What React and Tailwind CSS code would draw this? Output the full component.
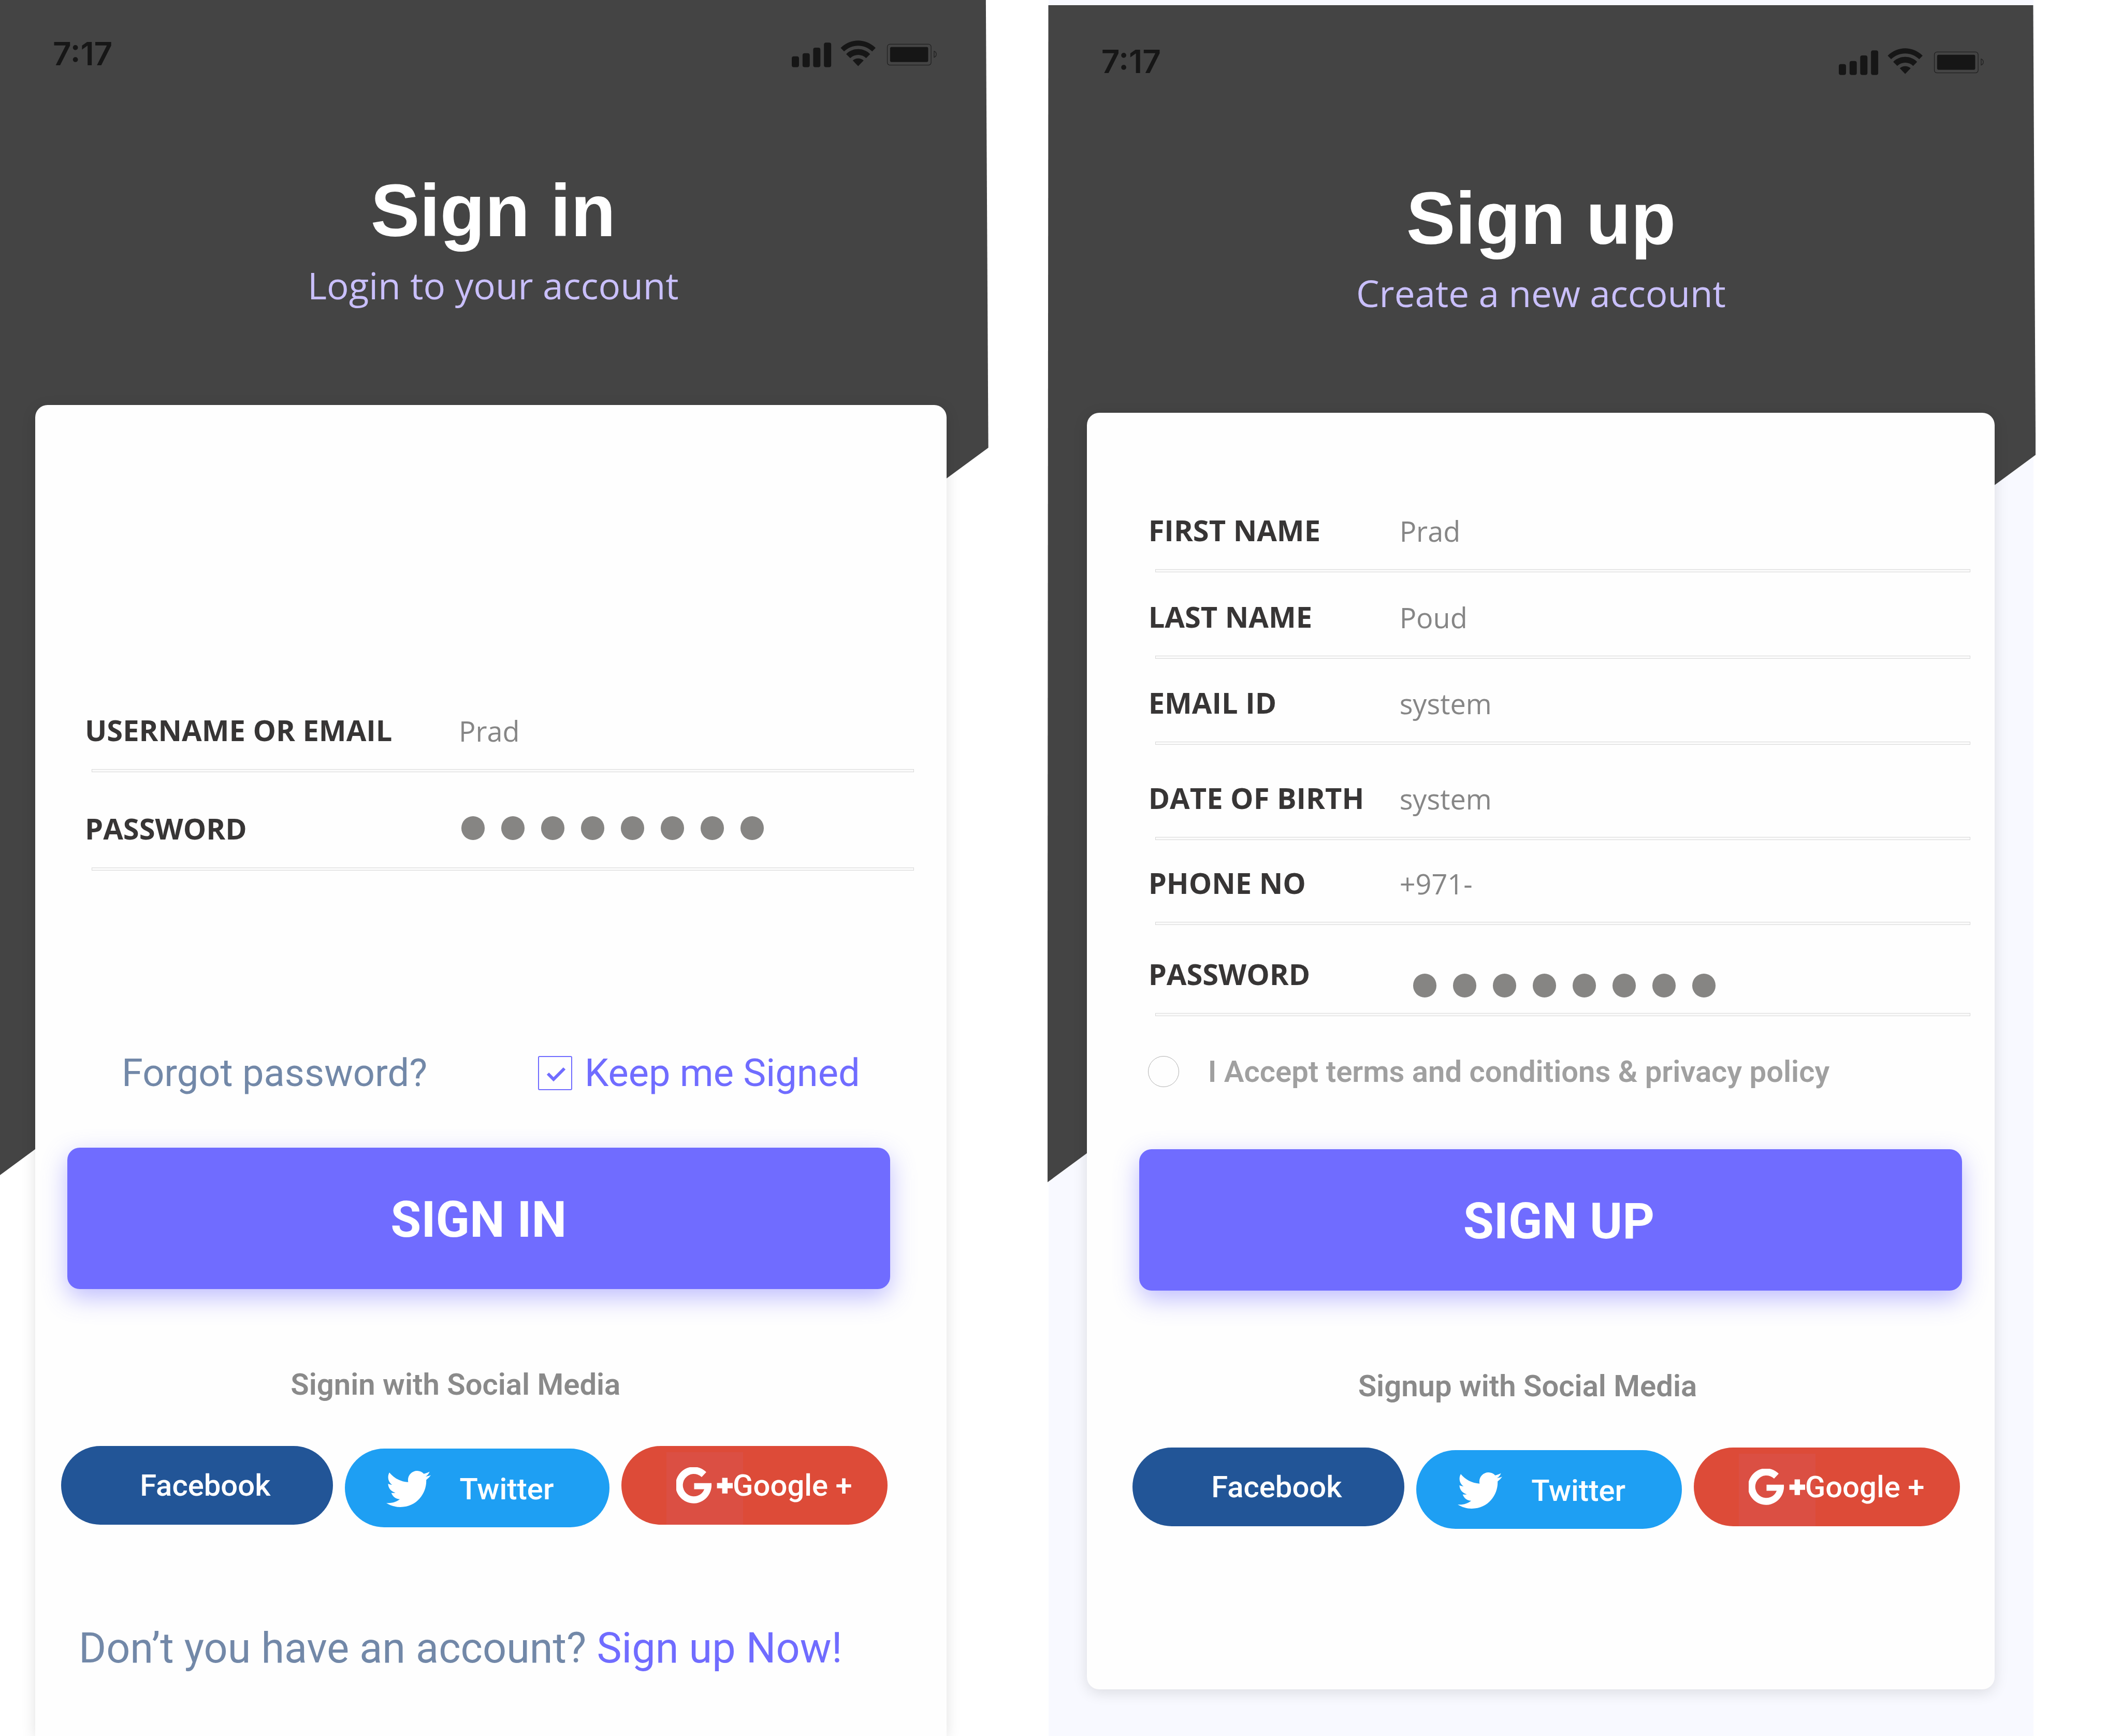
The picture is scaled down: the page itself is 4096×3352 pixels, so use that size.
import { FaTwitter } from "react-icons/fa";

function StatusIcons() {
  return (
    <svg className="h-[52px] w-[280px]" viewBox="155 119 1103 203" aria-hidden="true">
      <g fill="#161616">
        <rect x="155" y="239" width="55" height="83" rx="16" />
        <rect x="237" y="216" width="55" height="106" rx="16" />
        <rect x="318" y="173" width="55" height="149" rx="16" />
        <rect x="400" y="135" width="55" height="187" rx="16" />
        <path d="M527 175C604 101 716 101 793 175L767 202C704 144 616 144 553 202Z" />
        <path d="M569 222C620 172 700 172 751 222L721 253C687 220 634 220 600 253Z" />
        <path d="M619 271C643 250 677 250 702 271L660 314Z" />
        <rect x="903" y="168" width="290" height="115" rx="12" />
      </g>
      <g fill="none" stroke="#202020" strokeWidth="5">
        <rect x="882" y="147" width="333" height="159" rx="20" />
        <path d="M1238 200C1260 208 1260 238 1238 247Z" />
      </g>
    </svg>
  );
}

function GooglePlusMark() {
  return (
    <svg className="h-[71px] w-[109px] shrink-0" viewBox="95 78 427 277" fill="#fff" aria-hidden="true">
      <path d="M322 115A136 138 0 1 0 361 198H230V244H307A84 85 0 1 1 287 152Z" />
      <path d="M442 158H483V197H522V237H483V276H442V237H403V197H442Z" />
    </svg>
  );
}

function Header({ title, subtitle }) {
  return (
    <header className="relative text-center">
      <div className="flex items-center justify-between pt-18 pr-24 pl-[102px]">
        <span className="font-['Inter'] text-[62px] leading-[64px] font-semibold text-[#161616]">7:17</span>
        <StatusIcons />
      </div>
      <h1 className="mt-[199px] font-['Liberation_Sans'] text-[142px] leading-[144px] font-bold text-white">
        {title}
      </h1>
      <p className="mt-9 font-['Open_Sans'] text-[71px] leading-[72px] text-[#c9bffb]">{subtitle}</p>
    </header>
  );
}

function Field({ id, label, value, type = "text", columns, className = "", dots = "" }) {
  return (
    <div className={className}>
      <div className={`grid pb-10 ${columns}`}>
        <label
          htmlFor={id}
          className="font-['Open_Sans'] text-[56px] leading-[72px] font-bold whitespace-nowrap text-[#373535]"
        >
          {label}
        </label>
        {type === "password" ? (
          <div className="relative">
            <input
              id={id}
              type="password"
              defaultValue={value}
              className="h-[72px] w-full bg-transparent text-[52px] text-transparent outline-none"
            />
            <div className={`pointer-events-none absolute flex gap-8 ${dots}`} aria-hidden="true">
              {[...value].map((_, i) => (
                <span key={i} className="h-[46px] w-[45px] rounded-full bg-[#868583]" />
              ))}
            </div>
          </div>
        ) : (
          <input
            id={id}
            type={type}
            defaultValue={value}
            className="-mb-1 h-[76px] w-full min-w-0 bg-transparent font-['Open_Sans'] text-[54px] text-[#868686] outline-none"
          />
        )}
      </div>
      <div className="ml-[13px] h-[6px] border border-[#d8d8d8] bg-[#fafafa]" />
    </div>
  );
}

function SubmitButton({ children, className }) {
  return (
    <button
      type="submit"
      className={`h-[273px] rounded-3xl bg-[#706cff] pt-1 text-[96px] leading-none font-bold text-white shadow-[0_16px_48px_rgba(112,108,255,0.45)] ${className}`}
    >
      {children}
    </button>
  );
}

function SocialLogins({ title, className }) {
  return (
    <div className={className}>
      <h2 className="pr-18 text-center text-[58px] leading-[72px] font-semibold text-[#8a8a8a]">{title}</h2>
      <div className="mt-[83px] grid grid-cols-[525fr_512fr_514fr] gap-x-[23px] text-[58px] leading-none font-medium text-white">
        <button type="button" className="h-[152px] rounded-full bg-[#225597] pl-8">
          Facebook
        </button>
        <button
          type="button"
          className="mt-[5px] flex h-[152px] items-center gap-14 rounded-full bg-[#1e9ff3] pt-1 pl-20"
        >
          <FaTwitter className="size-[86px] shrink-0" />
          Twitter
        </button>
        <button
          type="button"
          className="relative flex h-[152px] items-center rounded-full bg-[#dd4b38] pl-[106px] whitespace-nowrap"
        >
          <span className="absolute top-3 bottom-0 left-[87px] w-[148px] bg-[#db4f43]" />
          <span className="relative flex items-center">
            <GooglePlusMark />
            Google +
          </span>
        </button>
      </div>
    </div>
  );
}

const signUpFields = [
  { id: "first-name", label: "FIRST NAME", value: "Prad" },
  { id: "last-name", label: "LAST NAME", value: "Poud", className: "mt-[49px]" },
  { id: "email", label: "EMAIL ID", value: "system", className: "mt-[48px]" },
  { id: "birth-date", label: "DATE OF BIRTH", value: "system", className: "mt-[66px]" },
  { id: "phone", label: "PHONE NO", value: "+971-", className: "mt-[46px]" },
  {
    id: "new-password",
    label: "PASSWORD",
    value: "password",
    type: "password",
    className: "mt-[58px]",
    dots: "top-9 left-[26px]",
  },
];

function SignIn() {
  return (
    <section className="relative flex w-[46.5%] flex-col">
      <div className="absolute top-0 -right-1 left-0 h-[2269px] bg-[#444] [clip-path:polygon(0_0,99.75%_0,100%_38.1%,0_100%)]" />
      <Header title="Sign in" subtitle="Login to your account" />
      <form className="relative mt-[195px] mr-[77px] ml-[68px] flex flex-1 flex-col rounded-t-3xl bg-[#fefefe] pt-[591px] shadow-[0_6px_28px_rgba(0,0,0,0.12)]">
        <div className="mr-[63px] ml-[96px]">
          <Field id="username" label="USERNAME OR EMAIL" value="Prad" columns="grid-cols-[722px_1fr]" />
          <Field
            id="password"
            label="PASSWORD"
            value="password"
            type="password"
            columns="grid-cols-[722px_1fr]"
            className="mt-18"
            dots="top-[13px] left-[5px]"
          />
        </div>
        <div className="mt-[355px] flex items-center justify-between pr-[167px] pl-[167px] text-[74px] leading-[72px]">
          <a href="#forgot" className="text-[#7288a8]">
            Forgot password?
          </a>
          <label className="flex items-center gap-6 text-[#706cff]">
            <span className="relative block size-[66px]">
              <input
                type="checkbox"
                defaultChecked
                className="block size-[66px] appearance-none rounded-[3px] border-2 border-[#706cff]"
              />
              <svg
                className="pointer-events-none absolute inset-0"
                viewBox="0 0 66 66"
                fill="none"
                stroke="#706cff"
                strokeWidth="6"
                aria-hidden="true"
              >
                <path d="M19 34L30 45L51 24" />
              </svg>
            </span>
            Keep me Signed
          </label>
        </div>
        <SubmitButton className="mt-[108px] mr-[109px] ml-[62px]">SIGN IN</SubmitButton>
        <SocialLogins title="Signin with Social Media" className="mt-[148px] mr-[114px] ml-[50px]" />
        <p className="mt-[186px] pl-[84px] text-[81px] leading-[96px] whitespace-nowrap text-[#7288a8]">
          Don’t you have an account?{" "}
          <a href="#sign-up" className="text-[#706cff]">
            Sign up Now!
          </a>
        </p>
      </form>
    </section>
  );
}

function SignUp() {
  return (
    <section id="sign-up" className="relative flex w-[46.45%] flex-col bg-[#f8f9ff] pt-[15px] pb-[90px]">
      <div className="absolute top-[10px] -right-1 -left-[2px] h-[2273px] bg-[#444] [clip-path:polygon(0.1%_0,99.75%_0,100%_38.2%,0_100%)]" />
      <Header title="Sign up" subtitle="Create a new account" />
      <form className="relative mt-[195px] mr-[75px] ml-[74px] flex flex-1 flex-col rounded-3xl bg-[#fefefe] pt-[190px] shadow-[0_6px_28px_rgba(0,0,0,0.12)]">
        <div className="mr-[47px] ml-[119px]">
          {signUpFields.map((field) => (
            <Field key={field.id} columns="grid-cols-[485px_1fr]" {...field} />
          ))}
        </div>
        <label className="mt-[75px] flex items-center gap-14 pl-[118px] text-[58px] leading-[64px] font-semibold text-[#a0a0a0]">
          <input type="radio" className="size-[60px] appearance-none rounded-full border border-[#b0b0b0]" />
          I Accept terms and conditions &amp; privacy policy
        </label>
        <SubmitButton className="mt-[118px] mr-[63px] ml-[101px] pl-8">SIGN UP</SubmitButton>
        <SocialLogins title="Signup with Social Media" className="mt-[148px] mr-[67px] ml-[88px]" />
      </form>
    </section>
  );
}

export default function App() {
  return (
    <main className="flex min-h-screen gap-30 overflow-hidden bg-white font-['Roboto',sans-serif]">
      <SignIn />
      <SignUp />
    </main>
  );
}
